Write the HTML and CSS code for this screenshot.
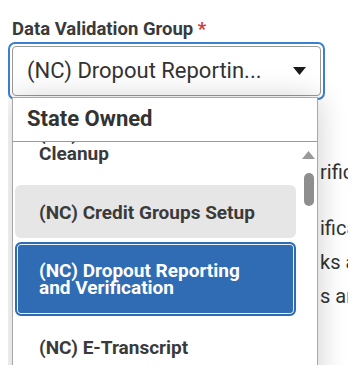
FILE: index.html
```html
<!DOCTYPE html>
<html lang="en">
<head>
<meta charset="utf-8">
<title>Data Validation Group</title>
<link rel="stylesheet" href="styles.css">
</head>
<body>
<div class="stage">
  <label class="field-label">Data Validation Group <span class="req">*</span></label>
  <div class="select-ring">
    <div class="select">
      <span class="select-value">(NC) Dropout Reportin...</span>
      <svg class="caret" width="13" height="8" viewBox="0 0 13 8"><path d="M0 0 H13 L6.5 8 Z" fill="#1a1a1a"/></svg>
    </div>
  </div>
  <div class="behind">
    <div class="behind-line l1">rification</div>
    <div class="behind-line l2">ification</div>
    <div class="behind-line">ks and</div>
    <div class="behind-line">s are</div>
  </div>
  <div class="panel">
    <div class="panel-head">State Owned</div>
    <div class="panel-body">
      <div class="list">
        <div class="list-inner">
          <div class="opt prev">(NC) Course Data<br>Cleanup</div>
          <div class="opt hover">(NC) Credit Groups Setup</div>
          <div class="opt selected">(NC) Dropout Reporting<br>and Verification</div>
          <div class="opt">(NC) E-Transcript</div>
        </div>
      </div>
      <div class="scrollbar">
        <svg class="sb-up" width="13" height="8" viewBox="0 0 13 8"><path d="M6.5 0 L13 8 H0 Z" fill="#9a9a9a"/></svg>
        <div class="sb-thumb"></div>
      </div>
    </div>
  </div>
</div>
</body>
</html>
```
FILE: styles.css
```css
html, body {
  margin: 0;
  padding: 0;
  background: #fff;
}
body {
  font-family: Roboto, "Liberation Sans", Arial, sans-serif;
  color: #333;
}
.stage {
  position: relative;
  margin-left: 8px;
  width: 340px;
  height: 365px;
  overflow: hidden;
  padding-top: 19px;
  box-sizing: border-box;
}
.field-label {
  display: block;
  margin-left: 4px;
  font-size: 18.5px;
  font-weight: 700;
  line-height: 21px;
  color: #3a3a3a;
}
.req {
  color: #d03a3a;
}
.select-ring {
  margin-top: 2px;
  width: 317px;
  box-sizing: border-box;
  border: 2px solid #3d7fcf;
  border-radius: 7px;
  padding: 2px;
}
.select {
  height: 50px;
  box-sizing: border-box;
  border: 1px solid #9a9a9a;
  border-radius: 4px;
  display: flex;
  align-items: center;
  justify-content: space-between;
  padding: 0 14px 2px 14px;
  background: #fff;
}
.select-value {
  font-size: 22px;
  color: #333;
}
.caret {
  display: block;
  margin-top: 2px;
}
.behind {
  margin-left: 312px;
  padding-top: 55px;
  font-size: 20px;
  color: #333;
  white-space: nowrap;
}
.behind-line {
  line-height: 34px;
}
.l2 { margin-top: 22px; }
.panel {
  position: absolute;
  left: 4px;
  top: 97px;
  width: 306px;
  height: 300px;
  box-sizing: border-box;
  background: #fff;
  border: 1px solid #a8a8a8;
  box-shadow: 0 2px 28px rgba(0, 0, 0, 0.2);
}
.panel-head {
  height: 44px;
  box-sizing: border-box;
  padding: 0 0 2px 14px;
  display: flex;
  align-items: center;
  font-size: 22px;
  font-weight: 700;
  color: #333;
  border-bottom: 1px solid #9a9a9a;
}
.panel-body {
  display: flex;
  height: 260px;
}
.list {
  flex: 1;
  overflow: hidden;
  padding-left: 2px;
}
.list-inner {
  margin-top: -37px;
  width: 281px;
  display: flex;
  flex-direction: column;
  gap: 4px;
}
.opt {
  padding: 19px 24px 17px;
  font-size: 19px;
  line-height: 17px;
  font-weight: 700;
  color: #3a3a3a;
  border-radius: 6px;
}
.opt.prev {
  line-height: 20px;
}
.opt.hover {
  background: #e6e6e6;
}
.opt.selected {
  background: #2f6cb4;
  color: #fff;
  padding: 18px 22px 18px;
  border: 2px solid #2f6cb4;
  box-shadow: inset 0 0 0 1px #e8f0fa;
}
.scrollbar {
  width: 17px;
  display: flex;
  flex-direction: column;
  align-items: center;
  padding-top: 9px;
  box-sizing: border-box;
}
.sb-up {
  display: block;
}
.sb-thumb {
  margin-top: 14px;
  width: 10px;
  height: 33px;
  border-radius: 5px;
  background: #8e8e8e;
}
```
